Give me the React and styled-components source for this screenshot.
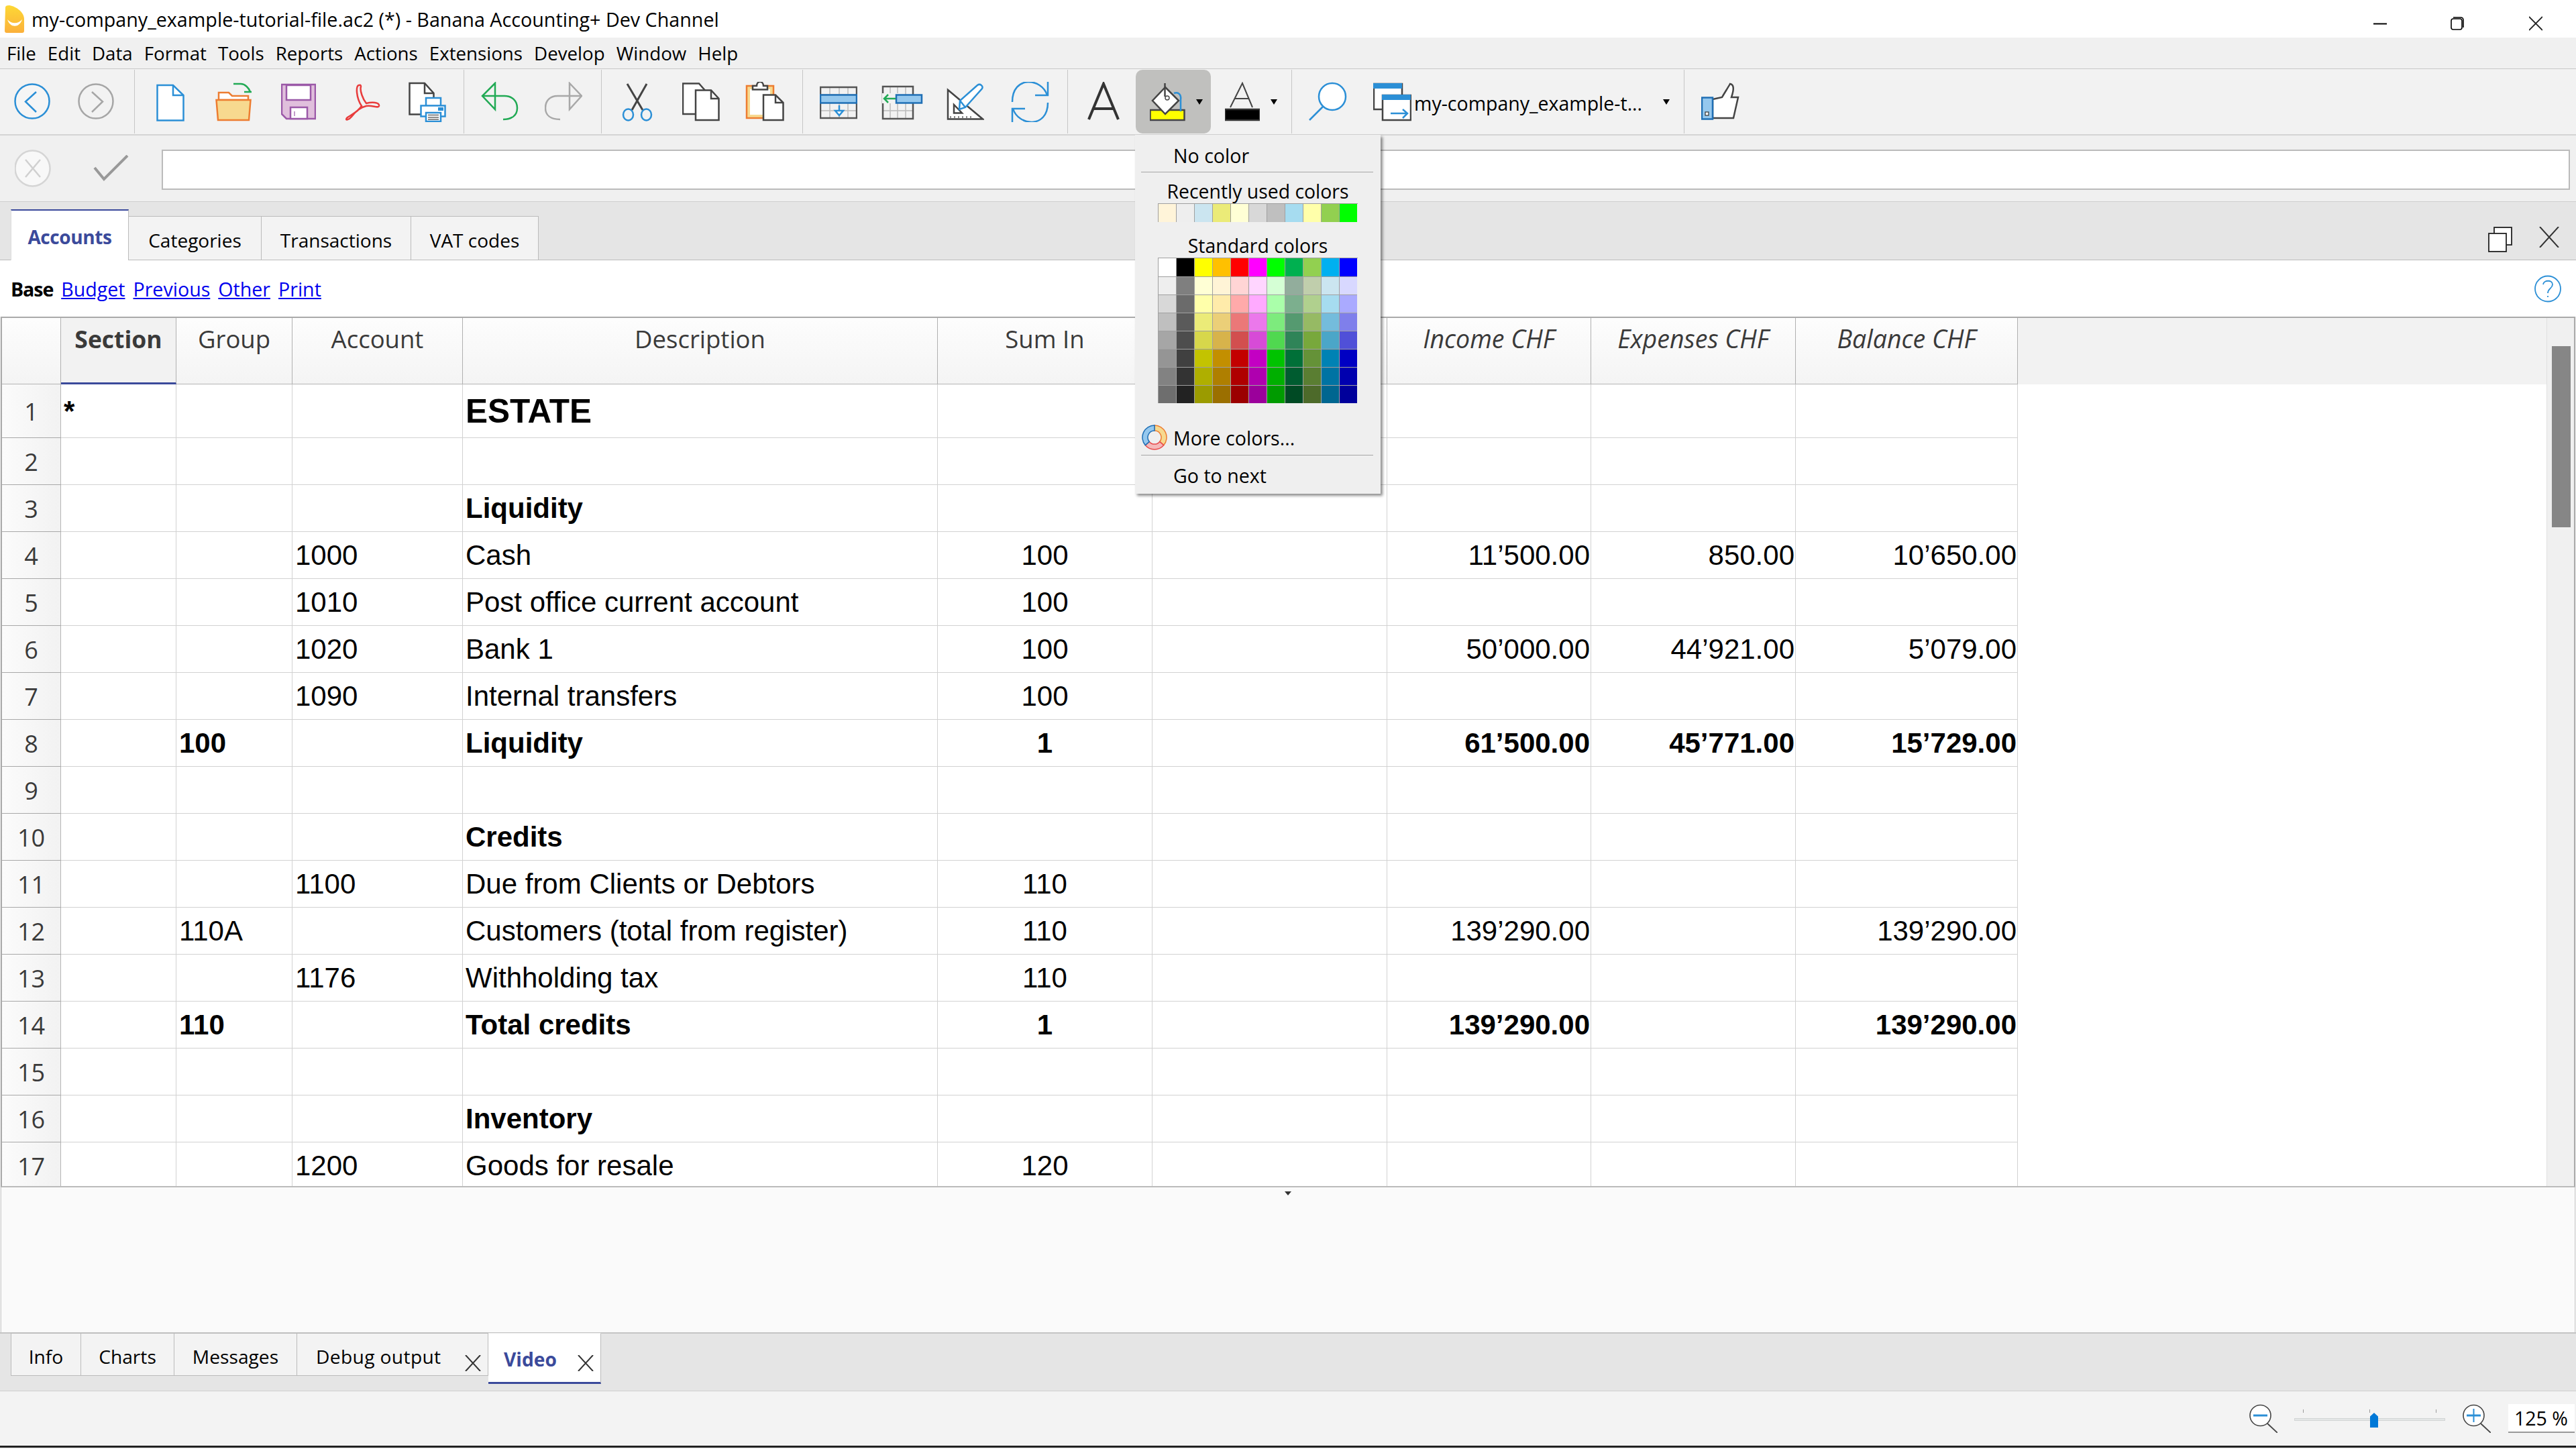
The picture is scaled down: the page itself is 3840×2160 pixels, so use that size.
import React from "react";
import styled, { createGlobalStyle } from "styled-components";

const GlobalStyle = createGlobalStyle`
  html, body {
    margin: 0;
    padding: 0;
    background: #f0f0f0;
  }
  * {
    box-sizing: border-box;
  }
`;

const BLUE = "#2b8fd6";
const DARK = "#444";
const UI_FONT = `"Open Sans", "Noto Sans", sans-serif`;
const ACTIVE = "#3b4a9b";

const Page = styled.div`
  position: relative;
  width: 3840px;
  height: 2160px;
  overflow: hidden;
  display: flex;
  flex-direction: column;
  font-family: ${UI_FONT};
  font-size: 28px;
  color: #000;
  background: #f0f0f0;
`;

const TitleBar = styled.div`
  height: 56px;
  background: #fff;
  display: flex;
  align-items: center;
`;

const TitleText = styled.div`
  margin-left: 11px;
  padding-top: 2px;
  flex: 1;
  white-space: nowrap;
  font-size: 28.7px;
  line-height: 54px;
`;

const WinControls = styled.div`
  display: flex;
  margin-right: 50px;
`;

const WinButton = styled.div`
  margin-left: ${(p) => p.$ml}px;
  display: flex;
`;

const MenuBar = styled.div`
  height: 47px;
  display: flex;
  align-items: center;
  padding: 0 0 0 10px;
  gap: 17px;
  background: #f0f0f0;
  border-bottom: 1px solid #c8c8c8;
  font-size: 27.7px;
`;

const Toolbar = styled.div`
  height: 99px;
  display: flex;
  align-items: center;
  background: #f2f2f2;
  border-bottom: 2px solid #d4d4d4;
`;

const Tool = styled.div`
  margin-left: ${(p) => p.$ml}px;
  display: flex;
  flex: none;
  align-items: center;
`;

const Sep = styled.div`
  margin-left: ${(p) => p.$ml}px;
  width: 1px;
  height: 95px;
  flex: none;
  background: #c6c6c6;
`;

const ToolPressed = styled.div`
  margin-left: ${(p) => p.$ml}px;
  width: ${(p) => p.$w}px;
  height: 95px;
  flex: none;
  display: flex;
  align-items: center;
  background: #c0c0be;
  border-radius: 10px;
`;

const DropArrow = styled.span`
  margin-left: ${(p) => p.$ml}px;
  flex: none;
  width: 0;
  height: 0;
  border-left: 5px solid transparent;
  border-right: 5px solid transparent;
  border-top: 8px solid #000;
`;

const DocName = styled.div`
  margin-left: 4px;
  width: 342px;
  flex: none;
  white-space: nowrap;
  font-size: 28.5px;
  padding-top: 5px;
`;

const FormulaRow = styled.div`
  height: 98px;
  display: flex;
  align-items: center;
  background: #f0f0f0;
`;

const FormulaInput = styled.div`
  margin-left: 49px;
  width: 3590px;
  height: 60px;
  background: #fff;
  border: 2px solid #bbb;
  margin-top: 3px;
`;

const TabStrip = styled.div`
  height: 88px;
  display: flex;
  align-items: flex-end;
  padding-left: 16px;
  background: #e5e5e5;
  border-top: 1px solid #cfcfcf;
  border-bottom: 1px solid #bbb;
`;

const TopTab = styled.div`
  width: ${(p) => p.$w}px;
  height: ${(p) => (p.$active ? 76 : 65)}px;
  margin-bottom: ${(p) => (p.$active ? -1 : 0)}px;
  padding-top: ${(p) => (p.$active ? 17 : 13)}px;
  line-height: 44px;
  text-align: center;
  font-weight: ${(p) => (p.$active ? 700 : 400)};
  font-size: 28px;
  letter-spacing: ${(p) => (p.$active ? -0.4 : 0)}px;
  color: ${(p) => (p.$active ? ACTIVE : "#000")};
  background: ${(p) => (p.$active ? "#fff" : "#f3f3f3")};
  border-top: ${(p) => (p.$active ? `2px solid ${ACTIVE}` : "1px solid #bbb")};
  border-right: 1px solid #bbb;
  border-left: ${(p) => (p.$active ? "1px solid #ddd" : "none")};
`;

const TabTools = styled.div`
  margin-left: auto;
  margin-right: 25px;
  height: 100%;
  display: flex;
  align-items: flex-start;
  padding-top: 37px;
  gap: 40px;
`;

const SubRow = styled.div`
  height: 84px;
  background: #fff;
  display: flex;
  align-items: center;
  padding: 0 22px 0 16px;
  gap: 12px;
  font-size: 28.6px;
`;

const BaseLabel = styled.b`
  letter-spacing: -1.1px;
`;

const SubLink = styled.a`
  color: #0000ee;
  text-decoration: underline;
`;

const HelpSlot = styled.div`
  margin-left: auto;
  display: flex;
`;

const TableArea = styled.div`
  height: 1298px;
  margin: 0 1px;
  display: flex;
  background: #fff;
  border-top: 2px solid #aaa;
  border-right: 2px solid #aaa;
  border-left: 2px solid #aaa;
  border-bottom: 2px solid #bbb;
  overflow: hidden;
`;

const Sheet = styled.div`
  flex: 1;
  min-width: 0;
`;

const COLS = "88px 172px 173px 254px 708px 320px 350px 304px 305px 331px 1fr";

const SheetRow = styled.div`
  display: grid;
  grid-template-columns: ${COLS};
  height: ${(p) => p.$h}px;
`;

const HeaderCell = styled.div`
  padding-top: 11px;
  line-height: 40px;
  font-size: ${(p) => (p.$italic ? 37.5 : p.$bold ? 35.5 : 36.5)}px;
  text-align: center;
  color: #3a3a3a;
  font-style: ${(p) => (p.$italic ? "italic" : "normal")};
  font-weight: ${(p) => (p.$bold ? 700 : 400)};
  background: ${(p) =>
    p.$bold ? "#f2f2f2" : "linear-gradient(#fdfdfd, #f4f4f4)"};
  border-right: 1px solid #b0b0b0;
  border-bottom: ${(p) => (p.$bold ? `3px solid ${ACTIVE}` : "1px solid #b4b4b4")};
`;

const HeaderFiller = styled.div`
  background: #f2f2f2;
`;

const RowNumber = styled.div`
  display: flex;
  align-items: center;
  justify-content: center;
  padding-top: 2px;
  font-size: 36px;
  color: #3a3a3a;
  background: linear-gradient(90deg, #fbfbfb, #f2f2f2);
  border-right: 1px solid #b4b4b4;
  border-bottom: 1px solid #a8a8a8;
`;

const Cell = styled.div`
  display: flex;
  align-items: center;
  justify-content: ${(p) =>
    p.$align === "right" ? "flex-end" : p.$align === "center" ? "center" : "flex-start"};
  padding: 0 ${(p) => (p.$align === "right" ? 1 : 3)}px 0 ${(p) => (p.$align ? 3 : 4)}px;
  white-space: nowrap;
  font-family: "Liberation Sans", Arial, sans-serif;
  font-size: ${(p) => (p.$big ? 49.5 : 42)}px;
  font-weight: ${(p) => (p.$bold ? 700 : 400)};
  border-right: 1px solid #d2d2d2;
  border-bottom: 1px solid #d2d2d2;
`;

const Scrollbar = styled.div`
  width: 41px;
  flex: none;
  background: #f0f0f0;
  border-left: 1px solid #e0e0e0;
  padding: 42px 0 0 7px;
`;

const ScrollThumb = styled.div`
  width: 28px;
  height: 270px;
  background: #868686;
`;

const LowerPanel = styled.div`
  height: 216px;
  margin: 0 1px;
  display: flex;
  justify-content: center;
  padding-top: 6px;
  background: #fafafa;
  border-left: 1px solid #ccc;
  border-right: 1px solid #ccc;
`;

const SplitArrow = styled.span`
  width: 0;
  height: 0;
  border-left: 5px solid transparent;
  border-right: 5px solid transparent;
  border-top: 6px solid #333;
`;

const BottomStrip = styled.div`
  height: 88px;
  display: flex;
  align-items: flex-start;
  padding-left: 16px;
  background: #e5e5e5;
  border-top: 2px solid #c4c4c4;
  border-bottom: 1px solid #cfcfcf;
`;

const BottomTab = styled.div`
  position: relative;
  width: ${(p) => p.$w}px;
  height: ${(p) => (p.$active ? 76 : 64)}px;
  margin-top: -1px;
  padding-top: ${(p) => (p.$active ? 16 : 12)}px;
  text-align: ${(p) => (p.$active || p.$closable ? "left" : "center")};
  padding-left: ${(p) => (p.$active ? 23 : p.$closable ? 28 : 0)}px;
  line-height: 44px;
  font-size: 28.2px;
  letter-spacing: ${(p) => (p.$closable ? 0.35 : 0)}px;
  font-weight: ${(p) => (p.$active ? 700 : 400)};
  color: ${(p) => (p.$active ? ACTIVE : "#000")};
  background: ${(p) => (p.$active ? "#fff" : "#f3f3f3")};
  border-right: 1px solid #bbb;
  border-left: ${(p) => (p.$first ? "1px solid #bbb" : "none")};
  border-bottom: ${(p) => (p.$active ? `3px solid ${ACTIVE}` : "1px solid #bbb")};
  border-top: ${(p) => (p.$active ? "1px solid #eee" : "1px solid #bbb")};
`;

const TabClose = styled.span`
  position: absolute;
  right: 10px;
  top: 32px;
  display: flex;
`;

const StatusBar = styled.div`
  height: 81px;
  display: flex;
  align-items: center;
  justify-content: flex-end;
  padding-right: 2px;
  background: #f3f3f3;
`;

const ZoomSlider = styled.div`
  position: relative;
  width: 225px;
  height: 43px;
  margin: 0 26px 0 25px;
`;

const SliderTrack = styled.div`
  position: absolute;
  left: 0;
  right: 0;
  top: 21px;
  height: 4px;
  background: #e4e7e7;
  border: 1px solid #d2d5d5;
`;

const SliderTick = styled.span`
  position: absolute;
  top: 8px;
  width: 1px;
  height: 5px;
  background: #9b9b9b;
`;

const SliderThumb = styled.div`
  position: absolute;
  left: 113px;
  top: 13px;
  width: 12px;
  height: 22px;
  background: #0078d7;
  clip-path: polygon(50% 0, 100% 25%, 100% 100%, 0 100%, 0 25%);
`;

const ZoomValue = styled.div`
  width: 99px;
  height: 43px;
  margin-left: 26px;
  background: #fff;
  border-bottom: 2px solid #999;
  text-align: right;
  padding-right: 10px;
  line-height: 42px;
  font-size: 28.6px;
`;

const BottomEdge = styled.div`
  height: 3px;
  background: #222;
`;

const ColorMenu = styled.div`
  position: absolute;
  left: 1692px;
  top: 201px;
  width: 366px;
  height: 535px;
  padding-top: 3px;
  background: #efefef;
  box-shadow: 3px 3px 4px rgba(0, 0, 0, 0.45);
`;

const MenuItem = styled.div`
  height: ${(p) => p.$h}px;
  margin-top: ${(p) => p.$mt || 0}px;
  padding: ${(p) => p.$pt || 0}px 0 0 57px;
  display: flex;
  align-items: center;
  font-size: 28.6px;
`;

const MenuSep = styled.div`
  height: 1px;
  margin: ${(p) => p.$mt || 0}px 11px 0 9px;
  background: #a6a6a6;
`;

const MenuCaption = styled.div`
  height: 36px;
  margin-top: ${(p) => p.$mt}px;
  line-height: 36px;
  text-align: center;
  font-size: 28.4px;
`;

const Swatches = styled.div`
  width: 298px;
  margin-left: 34px;
  display: grid;
  grid-template-columns: repeat(11, 27px);
  grid-auto-rows: 27px;
  border-top: 1px solid #a0a0a0;
`;

const Swatch = styled.div`
  border-left: 1px solid #a0a0a0;
  border-top: ${(p) => (p.$first ? 0 : 1)}px solid #a0a0a0;
`;

const MoreIcon = styled.span`
  position: absolute;
  left: 10px;
  display: flex;
`;

const RECENT = ["#fff4d9", "#eeeeee", "#cbe5f0", "#ebeb78", "#ffffd5", "#d8d8d8", "#bfbfbf", "#a6dcf0", "#ffffaa", "#92d050", "#00ff00"];

const STANDARD = [
  ["#ffffff", "#000000", "#ffff00", "#ffc000", "#ff0000", "#ff00ff", "#00ff00", "#00b050", "#92d050", "#00b0f0", "#0000ff"],
  ["#eeeeee", "#7f7f7f", "#ffffd5", "#fff4d6", "#ffd5d5", "#ffd5ff", "#d5ffd5", "#92ad9c", "#c0ceac", "#cbe5f0", "#d8d8ff"],
  ["#d8d8d8", "#6b6b6b", "#ffffaa", "#ffebaa", "#ffaaaa", "#ffaaff", "#aaffaa", "#7caf8e", "#b0d08e", "#a6dcf0", "#aaaaff"],
  ["#bfbfbf", "#5a5a5a", "#ebeb78", "#ebcf78", "#eb7878", "#eb78eb", "#7deb7d", "#559a70", "#96ba64", "#74bcdc", "#7f7feb"],
  ["#a6a6a6", "#4d4d4d", "#d7d74b", "#d7b34b", "#d24f4f", "#d74bd7", "#50d850", "#2f8458", "#78a83c", "#4ba6c8", "#5050d8"],
  ["#959595", "#404040", "#c3c300", "#c38f00", "#c30000", "#c300c3", "#00c300", "#007038", "#659238", "#0082b4", "#0000c3"],
  ["#828282", "#333333", "#afaf00", "#af7f00", "#af0000", "#af00af", "#00af00", "#005c30", "#5a7e32", "#0073a3", "#0000af"],
  ["#6e6e6e", "#222222", "#9b9b00", "#9b6f00", "#9b0000", "#9b009b", "#009b00", "#004a24", "#4d6a2a", "#006690", "#00009b"],
];

const MENUS = ["File", "Edit", "Data", "Format", "Tools", "Reports", "Actions", "Extensions", "Develop", "Window", "Help"];

// [section, group, account, description, sumIn, income, expenses, balance, bold]
const ROWS = [
  ["*", "", "", "ESTATE", "", "", "", "", "big"],
  [],
  ["", "", "", "Liquidity", "", "", "", "", "title"],
  ["", "", "1000", "Cash", "100", "11’500.00", "850.00", "10’650.00"],
  ["", "", "1010", "Post office current account", "100"],
  ["", "", "1020", "Bank 1", "100", "50’000.00", "44’921.00", "5’079.00"],
  ["", "", "1090", "Internal transfers", "100"],
  ["", "100", "", "Liquidity", "1", "61’500.00", "45’771.00", "15’729.00", "bold"],
  [],
  ["", "", "", "Credits", "", "", "", "", "title"],
  ["", "", "1100", "Due from Clients or Debtors", "110"],
  ["", "110A", "", "Customers (total from register)", "110", "139’290.00", "", "139’290.00"],
  ["", "", "1176", "Withholding tax", "110"],
  ["", "110", "", "Total credits", "1", "139’290.00", "", "139’290.00", "bold"],
  [],
  ["", "", "", "Inventory", "", "", "", "", "title"],
  ["", "", "1200", "Goods for resale", "120"],
];

// every toolbar icon uses page coordinates, 60px tall, so they line up on one axis
const Ico = ({ x, w, y = 122, h = 60, children }) => (
  <svg width={w} height={h} viewBox={`${x} ${y} ${w} ${h}`} fill="none" strokeWidth="2.5" style={{ display: "block" }}>
    {children}
  </svg>
);

const BananaLogo = () => (
  <svg width="29" height="41" viewBox="0 0 29 41" style={{ marginLeft: 7, display: "block" }}>
    <defs>
      <linearGradient id="ban" x1="0" y1="0" x2="0" y2="1">
        <stop offset="0" stopColor="#fdd835" />
        <stop offset="1" stopColor="#fbb03b" />
      </linearGradient>
    </defs>
    <path d="M1 3 C1 1 3 0 6 0 C14 0 29 9 29 20 V38 C29 40 28 41 26 41 H3 C1 41 0 40 0 38 Z" fill="url(#ban)" />
    <path d="M4 21 C10 28 20 28 26 21 C22 34 8 34 4 21 Z" fill="#fff" />
  </svg>
);

const MinIcon = () => (
  <svg width="20" height="40" viewBox="0 0 20 40"><path d="M0 27.5 H20" stroke="#000" strokeWidth="2" /></svg>
);

const RestoreIcon = () => (
  <svg width="20" height="40" viewBox="0 0 20 40" fill="none" stroke="#000" strokeWidth="1.6">
    <rect x="1" y="20" width="16" height="16" rx="3" />
    <path d="M4 18 H15 C17.5 18 19 19.5 19 22 V33" />
  </svg>
);

const CloseIcon = () => (
  <svg width="20" height="40" viewBox="0 0 20 40"><path d="M0 17 L20 37 M20 17 L0 37" stroke="#222" strokeWidth="1.8" /></svg>
);

const MoreColorsIcon = () => (
  <svg width="38" height="38" viewBox="0 0 38 38" strokeWidth="1.5">
    <path d="M19 1 A18 18 0 0 1 32.8 30.6 L26.7 25.4 A10 10 0 0 0 19 9 Z" fill="#f7d98f" stroke="#ed7d31" />
    <path d="M32.8 30.6 A18 18 0 0 1 5.2 30.6 L11.3 25.4 A10 10 0 0 0 26.7 25.4 Z" fill="#f5b9b9" stroke="#e84c4c" />
    <path d="M5.2 30.6 A18 18 0 0 1 19 1 L19 9 A10 10 0 0 0 11.3 25.4 Z" fill="#95c8ee" stroke="#1f6fb5" />
  </svg>
);

const ColorPopup = () => (
  <ColorMenu>
    <MenuItem $h={52} $pt={3}>No color</MenuItem>
    <MenuSep />
    <MenuCaption $mt={10}>Recently used colors</MenuCaption>
    <Swatches>
      {RECENT.map((c, i) => (
        <Swatch key={i} $first style={{ background: c }} />
      ))}
    </Swatches>
    <MenuCaption $mt={17}>Standard colors</MenuCaption>
    <Swatches>
      {STANDARD.flat().map((c, i) => (
        <Swatch key={i} $first={i < 11} style={{ background: c }} />
      ))}
    </Swatches>
    <MenuItem $h={38} $mt={32}>
      <MoreIcon><MoreColorsIcon /></MoreIcon>
      More colors...
    </MenuItem>
    <MenuSep $mt={7} />
    <MenuItem $h={58}>Go to next</MenuItem>
  </ColorMenu>
);

const MainToolbar = () => (
  <Toolbar>
    <Tool $ml={21}>
      <Ico x={21} w={54}>
        <circle cx="48" cy="151" r="25.5" stroke={BLUE} fill="#fff" fillOpacity="0.25" />
        <path d="M54 137 L38 151.5 L54 167" stroke={BLUE} />
      </Ico>
    </Tool>
    <Tool $ml={41}>
      <Ico x={116} w={54}>
        <circle cx="143" cy="151" r="25.5" stroke="#a6a6a6" />
        <path d="M137 137 L153 151.5 L137 167" stroke="#a6a6a6" />
      </Ico>
    </Tool>
    <Sep $ml={30} />
    <Tool $ml={32}>
      <Ico x={233} w={42}>
        <path d="M234.5 127 H258 L273.5 142 V179.5 H234.5 Z" fill="#fff" stroke={BLUE} />
        <path d="M258 127 V142 H273.5" stroke={BLUE} />
      </Ico>
    </Tool>
    <Tool $ml={46}>
      <Ico x={320} w={54}>
        <path d="M325 149 V138 H340 L345 143 H369 V149 Z" fill="#fff" stroke="#ed7d31" />
        <path d="M321.5 149 H372.5 L370 179 H324 Z" fill="#f7d98f" stroke="#ed7d31" />
        <path d="M347 125 H358 C364 125 370 131 372 137" stroke="#22aa55" />
        <path d="M363 137 H375.5 V124" stroke="#22aa55" />
      </Ico>
    </Tool>
    <Tool $ml={44}>
      <Ico x={418} w={52}>
        <path d="M419 126 H469 V177 H426 L419 170 Z" fill="#e0bfdc" stroke="#9b59a8" />
        <rect x="426" y="127" width="36" height="22" fill="#fff" stroke="#9b59a8" />
        <rect x="432" y="160" width="25" height="17" fill="#fff" stroke="#9b59a8" />
        <path d="M438 166 V173" stroke="#9b59a8" strokeWidth="1.2" />
      </Ico>
    </Tool>
    <Tool $ml={44}>
      <Ico x={514} w={52}>
        <path
          d="M534 127 C529 128 530 146 538 158 C532 168 520 172 516 176 C513 180 519 179 523 174 C529 166 536 160 545 158 C553 156 563 162 564 158 C565 152 553 152 545 154 C540 148 535 135 537 129 C537 126 535 127 534 127 Z"
          stroke="#e83c3c"
        />
      </Ico>
    </Tool>
    <Tool $ml={42}>
      <Ico x={608} w={56}>
        <path d="M609.5 124 H632 L645.5 139 V170.5 H609.5 Z" fill="#fff" stroke={DARK} />
        <path d="M632 124 V139 H645.5" stroke={DARK} />
        <rect x="634" y="146" width="22" height="12" fill="#fff" stroke={BLUE} />
        <rect x="626.5" y="157.5" width="36" height="16" fill="#fff" stroke={BLUE} />
        <rect x="652" y="160" width="8" height="5" fill={BLUE} />
        <rect x="634" y="168" width="22" height="13" fill="#fff" stroke={BLUE} />
        <path d="M637 171.5 H653 M637 175 H653 M637 178 H653" stroke="#666" strokeWidth="1.4" />
      </Ico>
    </Tool>
    <Sep $ml={26} />
    <Tool $ml={25}>
      <Ico x={716} w={56}>
        <path d="M737 124 L718 143 L737 163 Z" stroke="#22aa55" />
        <path d="M718 143 H751 C762 143 770 150 770 161 C770 172 762 178 749 178" stroke="#22aa55" />
      </Ico>
    </Tool>
    <Tool $ml={39}>
      <Ico x={811} w={56}>
        <path d="M848 124 L866 143 L848 163 Z" stroke="#a8a8a8" />
        <path d="M866 143 H830 C819 143 812 150 812 161 C812 172 820 178 834 178" stroke="#a8a8a8" />
      </Ico>
    </Tool>
    <Sep $ml={28} />
    <Tool $ml={30}>
      <Ico x={926} w={46}>
        <path d="M934 125 L957 164 M963 125 L941 164" stroke={DARK} strokeWidth="3" />
        <ellipse cx="935.5" cy="171" rx="7.5" ry="8.5" stroke={BLUE} />
        <ellipse cx="962.5" cy="171" rx="7.5" ry="8.5" stroke={BLUE} />
      </Ico>
    </Tool>
    <Tool $ml={44}>
      <Ico x={1016} w={56}>
        <path d="M1017 124.5 H1041 L1051 136 V170 H1017 Z" fill="#fff" stroke={DARK} />
        <path d="M1036 134.5 H1059 L1070.5 147 V179 H1036 Z" fill="#fff" stroke={DARK} />
        <path d="M1059 134.5 V147 H1070.5" stroke={DARK} />
      </Ico>
    </Tool>
    <Tool $ml={38}>
      <Ico x={1110} w={58}>
        <rect x="1112" y="128" width="40" height="48" fill="#f7d98f" stroke="#ed7d31" />
        <rect x="1117" y="133" width="30" height="38" fill="#fff" />
        <path d="M1121 133.5 V128 H1127 C1127 120 1137 120 1137 128 H1143 V133.5 Z" fill="#fff" stroke={DARK} />
        <path d="M1137 141.5 H1155 L1166.5 153 V179 H1137 Z" fill="#fff" stroke={DARK} />
        <path d="M1155 141.5 V153 H1166.5" stroke={DARK} />
      </Ico>
    </Tool>
    <Sep $ml={27} />
    <Tool $ml={25}>
      <Ico x={1221} w={56}>
        <path d="M1222 141 H1276 M1222 165 H1276 M1236 130 V176 M1250 130 V176 M1263 130 V176" stroke="#bbb" strokeWidth="1.5" />
        <rect x="1222" y="130" width="54" height="46" stroke="#555" />
        <rect x="1222" y="141.5" width="54" height="12" fill="#95c8ee" stroke="#1f6fb5" />
        <path d="M1250 157 V168" stroke={BLUE} />
        <path d="M1244 165 H1256 L1250 172 Z" stroke={BLUE} fill="#fff" />
      </Ico>
    </Tool>
    <Tool $ml={36}>
      <Ico x={1313} w={62}>
        <path d="M1315 153 H1360 M1315 165 H1360 M1326 129 V177 M1337 129 V177 M1349 129 V177" stroke="#bbb" strokeWidth="1.5" />
        <rect x="1315" y="129" width="45" height="48" stroke="#555" />
        <rect x="1314" y="139" width="24" height="15" fill="#f2f2f2" />
        <rect x="1335" y="141.5" width="38" height="12" fill="#95c8ee" stroke="#1f6fb5" />
        <path d="M1334 147 H1318 M1323 141 L1317 147 L1323 153" stroke="#22aa55" />
      </Ico>
    </Tool>
    <Tool $ml={35}>
      <Ico x={1410} w={56}>
        <path d="M1412 134 V177.5 H1464 Z" fill="#fff" stroke={DARK} />
        <path d="M1421 156 V168.5 H1433 Z" stroke={DARK} />
        <path d="M1416 176 V173 M1422 176 V173 M1428 176 V173 M1434 176 V173 M1440 176 V173 M1446 176 V173" stroke={DARK} strokeWidth="1.2" />
        <path d="M1429 163 L1430 150 L1456 127 C1460 124 1465 128 1463 132 L1438 160 Z" fill="#fff" stroke={BLUE} />
        <path d="M1430 150 L1438 160" stroke={BLUE} />
      </Ico>
    </Tool>
    <Tool $ml={40}>
      <Ico x={1506} w={57}>
        <path d="M1508 152 C1508 112 1552 116 1560 142" stroke={BLUE} />
        <path d="M1561 122 V142 H1542" stroke={BLUE} />
        <path d="M1561 153 C1561 192 1517 188 1509 162" stroke={BLUE} />
        <path d="M1508 182 V162 H1527" stroke={BLUE} />
      </Ico>
    </Tool>
    <Sep $ml={27} />
    <Tool $ml={29}>
      <Ico x={1620} w={48}>
        <path d="M1622 178 L1644 125 L1666 178" stroke="#333" strokeWidth="4" />
        <path d="M1630 162 H1658" stroke="#333" strokeWidth="4" />
      </Ico>
    </Tool>
    <ToolPressed $ml={24} $w={112}>
      <Tool $ml={21}>
        <Ico x={1713} w={53}>
          <rect x="1713.5" y="164" width="51" height="15" fill="#ffff00" stroke={DARK} />
          <path d="M1736 130 L1756 150 L1736 170 L1717 150 Z" fill="#fff" stroke={DARK} />
          <path d="M1735.5 124 V144" stroke={DARK} />
          <circle cx="1739" cy="146" r="3" stroke={DARK} strokeWidth="1.4" />
          <path d="M1749 139 C1756 136 1760 142 1759 148 V166" stroke={BLUE} />
        </Ico>
      </Tool>
      <DropArrow $ml={16} />
    </ToolPressed>
    <Tool $ml={21}>
      <Ico x={1825} w={52}>
        <path d="M1833 160 L1851 124 L1866 160 M1839 147 H1861" stroke={DARK} strokeWidth="2" />
        <rect x="1825" y="163" width="52" height="16" fill="#000" stroke="#333" />
      </Ico>
    </Tool>
    <DropArrow $ml={16} />
    <Sep $ml={21} />
    <Tool $ml={25}>
      <Ico x={1950} w={60}>
        <circle cx="1985" cy="144" r="20" fill="#fff" stroke={BLUE} />
        <path d="M1971 159 L1951 179" stroke={BLUE} />
      </Ico>
    </Tool>
    <Tool $ml={36}>
      <Ico x={2046} w={57}>
        <rect x="2047" y="125" width="42" height="38" fill="#fff" stroke={DARK} />
        <rect x="2046" y="124" width="43" height="8" fill={BLUE} />
        <rect x="2060" y="142" width="42" height="37" fill="#fff" stroke={DARK} />
        <rect x="2059" y="141" width="43" height="8" fill={BLUE} />
        <path d="M2072 169 H2096 M2090 163 L2097 169 L2090 176" stroke={BLUE} />
      </Ico>
    </Tool>
    <DocName>my-company_example-t...</DocName>
    <DropArrow $ml={29} />
    <Sep $ml={21} />
    <Tool $ml={25}>
      <Ico x={2535} w={57}>
        <path d="M2552 148 L2566 145 C2570 138 2574 132 2578 125 C2584 126 2584 133 2580 145 H2590 L2583 176 H2552 Z" fill="#fff" stroke={DARK} />
        <rect x="2536" y="145.5" width="16" height="32" fill="#95c8ee" stroke="#1f6fb5" />
        <rect x="2541" y="167" width="5" height="5" fill="#fff" stroke="#333" strokeWidth="1.2" />
      </Ico>
    </Tool>
  </Toolbar>
);

const XGlyph = ({ w, h, color = "#333" }) => (
  <svg width={w} height={h} viewBox={`0 0 ${w} ${h}`} style={{ display: "block" }}>
    <path d={`M1 0 L${w - 1} ${h} M${w - 1} 0 L1 ${h}`} stroke={color} strokeWidth="2" />
  </svg>
);

const Magnifier = ({ plus }) => (
  <svg width="42" height="43" viewBox="0 0 42 43" fill="none" style={{ display: "block" }}>
    <circle cx="16.5" cy="17" r="15.5" fill="#fff" stroke="#444" strokeWidth="1.6" />
    <path d="M27 29 L42 43" stroke="#444" strokeWidth="1.8" />
    <path d="M6 17 H27" stroke={BLUE} strokeWidth="3" />
    {plus && <path d="M16.5 7 V27" stroke={BLUE} strokeWidth="2" />}
  </svg>
);

const SheetLine = ({ index, row }) => {
  const kind = row[8];
  const bold = kind === "bold";
  return (
    <SheetRow $h={index === 0 ? 80 : 70}>
      <RowNumber>{index + 1}</RowNumber>
      <Cell $bold={row[0] === "*"}>{row[0]}</Cell>
      <Cell $bold={bold}>{row[1]}</Cell>
      <Cell>{row[2]}</Cell>
      <Cell $bold={!!kind} $big={kind === "big"}>{row[3]}</Cell>
      <Cell $align="center" $bold={bold}>{row[4]}</Cell>
      <Cell />
      <Cell $align="right" $bold={bold}>{row[5]}</Cell>
      <Cell $align="right" $bold={bold}>{row[6]}</Cell>
      <Cell $align="right" $bold={bold}>{row[7]}</Cell>
    </SheetRow>
  );
};

export default function App() {
  return (
    <Page>
      <GlobalStyle />
      <TitleBar>
        <BananaLogo />
        <TitleText>my-company_example-tutorial-file.ac2 (*) - Banana Accounting+ Dev Channel</TitleText>
        <WinControls>
          <WinButton $ml={0}><MinIcon /></WinButton>
          <WinButton $ml={95}><RestoreIcon /></WinButton>
          <WinButton $ml={97}><CloseIcon /></WinButton>
        </WinControls>
      </TitleBar>

      <MenuBar>
        {MENUS.map((m) => (
          <span key={m}>{m}</span>
        ))}
      </MenuBar>

      <MainToolbar />

      <FormulaRow>
        <Tool $ml={22}>
          <Ico x={22} y={222} w={54} h={56}>
            <ellipse cx="48.5" cy="250" rx="26" ry="26.5" fill="#f8f8f8" stroke="#d5d5d5" />
            <path d="M38 237 L60 263 M60 237 L38 263" stroke="#d0d0d0" />
          </Ico>
        </Tool>
        <Tool $ml={63}>
          <Ico x={139} y={232} w={53} h={40}>
            <path d="M141 251 L155 268 L190 233" stroke="#999" strokeWidth="4" />
          </Ico>
        </Tool>
        <FormulaInput />
      </FormulaRow>

      <TabStrip>
        <TopTab $w={176} $active>Accounts</TopTab>
        <TopTab $w={198}>Categories</TopTab>
        <TopTab $w={223}>Transactions</TopTab>
        <TopTab $w={190}>VAT codes</TopTab>
        <TabTools>
          <svg width="36" height="38" viewBox="0 0 36 38" fill="#fff" stroke="#222" strokeWidth="1.8" style={{ display: "block" }}>
            <rect x="9" y="1" width="26" height="26" />
            <rect x="1" y="10" width="26" height="27" />
          </svg>
          <XGlyph w={30} h={31} />
        </TabTools>
      </TabStrip>

      <SubRow>
        <BaseLabel>Base</BaseLabel>
        <SubLink>Budget</SubLink>
        <SubLink>Previous</SubLink>
        <SubLink>Other</SubLink>
        <SubLink>Print</SubLink>
        <HelpSlot>
          <svg width="40" height="41" viewBox="0 0 40 41" fill="none" stroke={BLUE} strokeWidth="1.8">
            <circle cx="20" cy="20.5" r="19" />
            <path d="M13 14 C14 7 27 7 27 14 C27 20 20 20 20 27" />
            <path d="M20 31 V33" />
          </svg>
        </HelpSlot>
      </SubRow>

      <TableArea>
        <Sheet>
          <SheetRow $h={99}>
            <HeaderCell />
            <HeaderCell $bold>Section</HeaderCell>
            <HeaderCell>Group</HeaderCell>
            <HeaderCell>Account</HeaderCell>
            <HeaderCell>Description</HeaderCell>
            <HeaderCell>Sum In</HeaderCell>
            <HeaderCell />
            <HeaderCell $italic>Income CHF</HeaderCell>
            <HeaderCell $italic>Expenses CHF</HeaderCell>
            <HeaderCell $italic>Balance CHF</HeaderCell>
            <HeaderFiller />
          </SheetRow>
          {ROWS.map((row, i) => (
            <SheetLine key={i} index={i} row={row} />
          ))}
        </Sheet>
        <Scrollbar>
          <ScrollThumb />
        </Scrollbar>
      </TableArea>

      <LowerPanel>
        <SplitArrow />
      </LowerPanel>

      <BottomStrip>
        <BottomTab $w={105} $first>Info</BottomTab>
        <BottomTab $w={139}>Charts</BottomTab>
        <BottomTab $w={183}>Messages</BottomTab>
        <BottomTab $w={285} $closable>
          Debug output
          <TabClose><XGlyph w={24} h={24} /></TabClose>
        </BottomTab>
        <BottomTab $w={168} $active>
          Video
          <TabClose><XGlyph w={24} h={24} /></TabClose>
        </BottomTab>
      </BottomStrip>

      <StatusBar>
        <Magnifier />
        <ZoomSlider>
          <SliderTrack />
          <SliderTick style={{ left: 13 }} />
          <SliderTick style={{ left: 112 }} />
          <SliderTick style={{ left: 211 }} />
          <SliderThumb />
        </ZoomSlider>
        <Magnifier plus />
        <ZoomValue>125 %</ZoomValue>
      </StatusBar>
      <BottomEdge />

      <ColorPopup />
    </Page>
  );
}
